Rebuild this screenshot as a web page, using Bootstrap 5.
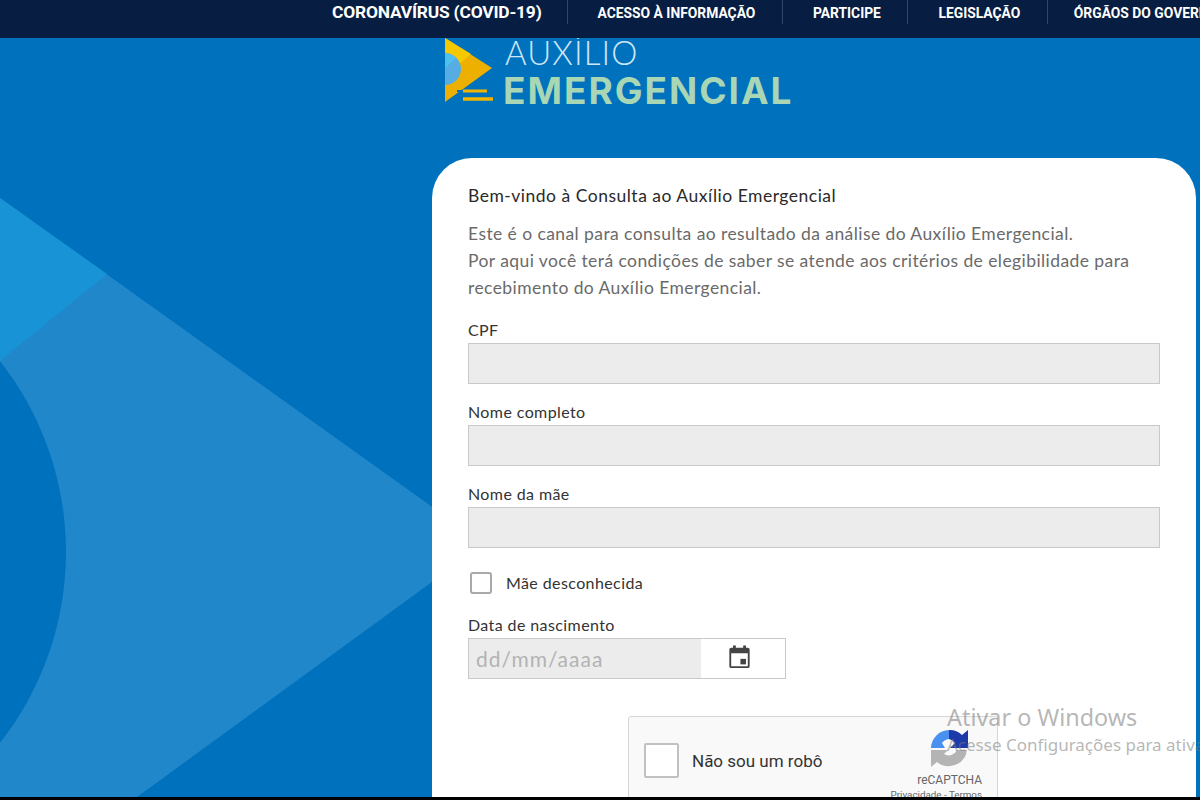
<!DOCTYPE html>
<html lang="pt-BR">
<head>
  <meta charset="UTF-8" />
  <meta name="viewport" content="width=device-width, initial-scale=1" />
  <title>Auxílio Emergencial</title>
  <link href="https://cdn.jsdelivr.net/npm/bootstrap@5.3.2/dist/css/bootstrap.min.css" rel="stylesheet" />
  <style>
    html, body { height: 100%; overflow: hidden; }
    body { background: #000; font-family: "Lato", "Liberation Sans", sans-serif; color: #333; }
    .topo { height: 38px; background: #071d41; padding-left: 332px; white-space: nowrap; overflow: hidden; z-index: 2; }
    .topo-item { color: #fff; font-family: "Roboto", sans-serif; font-weight: 700; font-size: 13.85px; height: 24px; line-height: 26px; text-decoration: none; padding: 0 26.5px 0 30px; border-right: 1px solid #33466a; flex-shrink: 0; }
    .topo-item.destaque { font-size: 17.4px; line-height: 24px; padding: 0 25px 0 0; letter-spacing: -.2px; }
    .topo-item:last-child { border: 0; padding-left: 26px; }
    .fundo { height: 759px; background: #0072bd; overflow: hidden; }
    .fundo-arte { position: absolute; left: 0; top: 0; }
    .marca { height: 120px; padding-left: 445px; }
    .marca-texto { padding-left: 10px; line-height: 1; }
    .marca-um { font-size: 33px; font-weight: 300; color: #cfe6f5; height: 37px; line-height: 29px; letter-spacing: 1.1px; margin-left: 2px; }
    .marca-dois { font-family: "Inter", sans-serif; font-size: 37px; font-weight: 700; color: #a9d6b4; line-height: 32px; letter-spacing: 2px; }
    .painel { margin-left: 432px; width: 764px; background: #fff; border-radius: 40px 40px 0 0; padding: 27px 36px 0; height: 660px; }
    .painel-titulo { font-size: 17.5px; line-height: 22px; letter-spacing: .5px; color: #2a2a2a; margin-bottom: 13px; }
    .painel-texto { font-size: 17.5px; line-height: 27px; letter-spacing: .42px; color: #6a6a6a; margin-bottom: 0; }
    .campo-rotulo { font-size: 16px; line-height: 20px; letter-spacing: .4px; color: #333; margin: 0 0 3px; display: block; }
    .campo-lista { gap: 18px; margin-top: 19px; }
    .campo-caixa { height: 41px; background: #ececec; border: 1px solid #c9c9c9; border-radius: 0; }
    .mae-linha { margin-top: 24px; padding-left: 2px; }
    .marcador { width: 22px; height: 22px; border: 2px solid #a9a9a9; border-radius: 3px; background: #fff; margin-right: 14px; }
    .data-linha { margin-top: 21px; }
    .data-grupo { width: 318px; height: 41px; border: 1px solid #c9c9c9; }
    .data-valor { width: 232px; background: #ececec; color: #b3b3b3; font-size: 21px; letter-spacing: 1px; line-height: 39px; padding-left: 7px; }
    .data-icone { padding: 0 7px 3px 0; }
    .robo { width: 370px; height: 90px; margin-left: 160px; margin-top: 37px; background: #f9f9f9; border: 1px solid #d6d6d6; border-radius: 3px; padding: 26px 15px 0 15px; }
    .robo-check { width: 35px; height: 35px; background: #fff; border: 2px solid #c1c1c1; border-radius: 2px; }
    .robo-texto { font-family: "Roboto", sans-serif; font-size: 17px; line-height: 24px; color: #333; margin: 6px 0 0 13px; }
    .robo-selo { width: 100px; margin-top: -13px; font-family: "Roboto", sans-serif; color: #666; text-align: right; white-space: nowrap; }
    .robo-selo svg { display: block; margin: 0 14px 6px auto; }
    .selo-nome { font-size: 12px; line-height: 14px; }
    .selo-links { font-size: 9.8px; line-height: 16px; }
    .aviso { position: absolute; left: 947px; top: 702px; color: rgba(120,120,120,.55); font-family: "Noto Sans", sans-serif; white-space: nowrap; pointer-events: none; }
    .aviso-um { font-size: 23.4px; line-height: 30px; }
    .aviso-dois { font-size: 17px; line-height: 26px; }
  </style>
</head>
<body>
  <nav class="topo d-flex align-items-start position-relative">
    <a class="topo-item destaque" href="#">CORONAVÍRUS (COVID-19)</a>
    <a class="topo-item" href="#">ACESSO À INFORMAÇÃO</a>
    <a class="topo-item" href="#">PARTICIPE</a>
    <a class="topo-item" href="#">LEGISLAÇÃO</a>
    <a class="topo-item" href="#">ÓRGÃOS DO GOVERNO</a>
  </nav>

  <main class="fundo position-relative">
    <!-- arte de fundo -->
    <svg class="fundo-arte" width="1200" height="759" viewBox="0 38 1200 759">
      <polygon points="0,198 484,544 137,797 0,797" fill="#2187cb"/>
      <polygon points="0,198 107,274 0,361" fill="#1793d6"/>
      <circle cx="-243" cy="552" r="309" fill="#0072bd"/>
    </svg>

    <div class="marca d-flex position-relative">
      <svg width="48" height="66" viewBox="0 0 48 66" class="flex-shrink-0">
        <polygon points="0,0 47,30 0,64" fill="#eeb000"/>
        <polygon points="0,0 26,16 10,30 0,15" fill="#f5c800"/>
        <path d="M0 15a16 16 0 0 1 0 32z" fill="#55ade4"/>
        <path d="M0 15a16 16 0 0 1 11 5L0 30z" fill="#4fc0ee"/>
        <path d="M18 53h24" stroke="#f0b400" stroke-width="3"/>
        <path d="M18 61h30" stroke="#f0b400" stroke-width="3.5"/>
        <path d="M12 53h6" stroke="#0072bd" stroke-width="2"/>
      </svg>
      <div class="marca-texto">
        <div class="marca-um">AUXÍLIO</div>
        <div class="marca-dois">EMERGENCIAL</div>
      </div>
    </div>

    <section class="painel position-relative">
      <h1 class="painel-titulo fw-normal">Bem-vindo à Consulta ao Auxílio Emergencial</h1>
      <p class="painel-texto">Este é o canal para consulta ao resultado da análise do Auxílio Emergencial.<br />Por aqui você terá condições de saber se atende aos critérios de elegibilidade para recebimento do Auxílio Emergencial.</p>

      <div class="campo-lista d-flex flex-column">
        <div>
          <label class="campo-rotulo" for="cpf">CPF</label>
          <input class="form-control campo-caixa" id="cpf" type="text" />
        </div>
        <div>
          <label class="campo-rotulo" for="nome">Nome completo</label>
          <input class="form-control campo-caixa" id="nome" type="text" />
        </div>
        <div>
          <label class="campo-rotulo" for="mae">Nome da mãe</label>
          <input class="form-control campo-caixa" id="mae" type="text" />
        </div>
      </div>

      <div class="mae-linha d-flex align-items-center">
        <span class="marcador flex-shrink-0"></span>
        <span class="campo-rotulo mb-0">Mãe desconhecida</span>
      </div>

      <div class="data-linha">
        <label class="campo-rotulo" for="data">Data de nascimento</label>
        <div class="data-grupo d-flex">
          <div class="data-valor" id="data">dd/mm/aaaa</div>
          <div class="data-icone flex-grow-1 d-flex align-items-center justify-content-center">
            <svg width="23" height="24" viewBox="0 0 24 26">
              <path d="M3 3h18a2 2 0 0 1 2 2v18a2 2 0 0 1-2 2H3a2 2 0 0 1-2-2V5a2 2 0 0 1 2-2zm0 6v14h18V9z" fill="#444" fill-rule="evenodd"/>
              <rect x="5" y="0.5" width="3" height="4" fill="#444"/>
              <rect x="16" y="0.5" width="3" height="4" fill="#444"/>
              <rect x="13" y="15" width="6" height="6" fill="#444"/>
            </svg>
          </div>
        </div>
      </div>

      <div class="robo d-flex">
        <span class="robo-check flex-shrink-0"></span>
        <span class="robo-texto">Não sou um robô</span>
        <div class="robo-selo ms-auto">
          <svg width="37" height="37" viewBox="0 0 37 37">
            <path d="M0 18A18.5 18.5 0 0 1 18 0V9A9.5 9.5 0 0 0 11 13L14 18Z" fill="#4a90ee"/>
            <path d="M18 0A18.5 18.5 0 0 1 31 5L37 0V18H19L24 13A9.5 9.5 0 0 0 18 9Z" fill="#1c3aa9"/>
            <path d="M0 20H17L13 24A9 9 0 0 0 26 20H36A18.5 18.5 0 0 1 6 32L0 37Z" fill="#b4b4b4"/>
          </svg>
          <div class="selo-nome">reCAPTCHA</div>
          <div class="selo-links">Privacidade - Termos</div>
        </div>
      </div>
    </section>
  </main>

  <div class="aviso">
    <div class="aviso-um">Ativar o Windows</div>
    <div class="aviso-dois">Acesse Configurações para ativar o Windows.</div>
  </div>

  <script src="https://cdn.jsdelivr.net/npm/bootstrap@5.3.2/dist/js/bootstrap.bundle.min.js"></script>
</body>
</html>
